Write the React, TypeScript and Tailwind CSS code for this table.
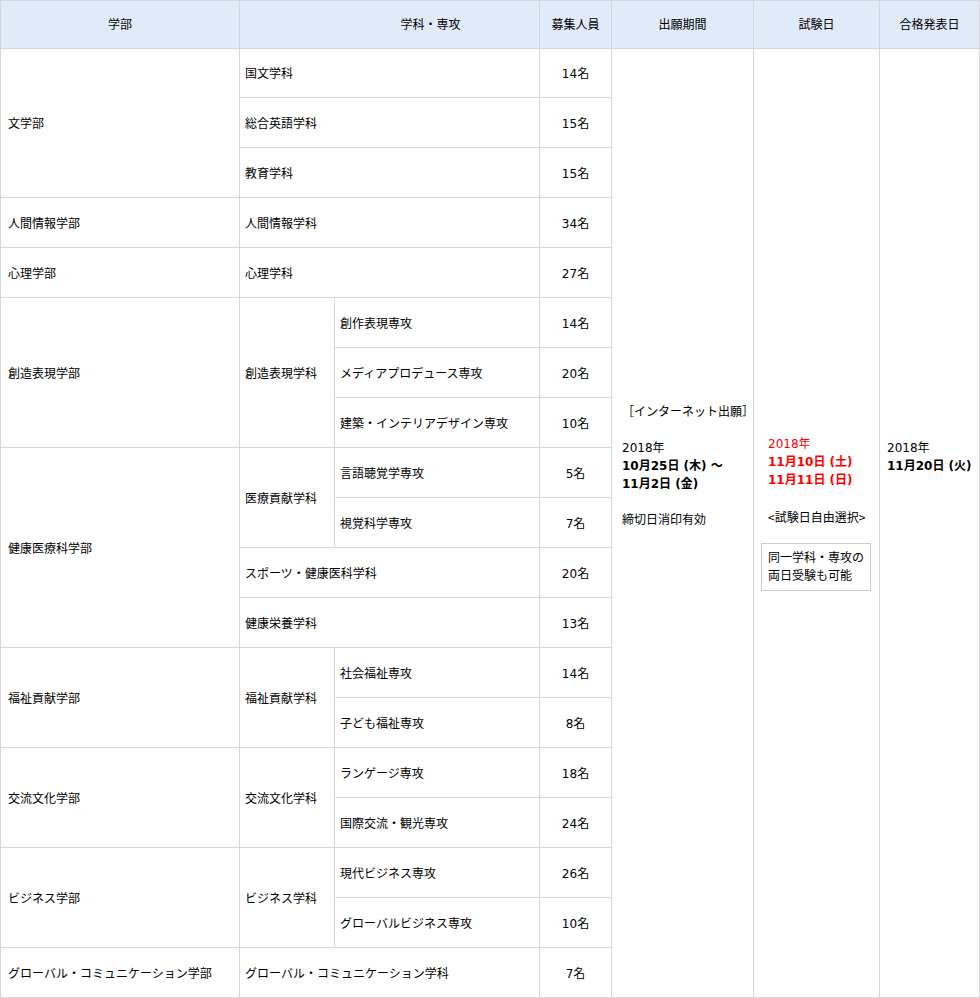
import React from "react";

const base = "bg-white flex items-center text-[12px] leading-[18px] text-black pt-[2px]";

function C({ children, className = "" }: { children: React.ReactNode; className?: string }) {
  return <div className={`${base} ${className}`}>{children}</div>;
}

function Num({ children }: { children: React.ReactNode }) {
  return <C className="justify-center">{children}</C>;
}

function H({ children, className = "" }: { children: React.ReactNode; className?: string }) {
  return (
    <div className={`bg-[#e1eaf8] flex items-center justify-center text-[12px] leading-[18px] text-black ${className}`}>
      {children}
    </div>
  );
}

export default function App() {
  return (
    <div className="w-[980px] font-['DejaVu_Sans','Noto_Sans_CJK_JP',sans-serif]">
      <div className="grid grid-cols-[238px_94px_204px_71px_141px_125px_99px] grid-rows-[47px_48px_repeat(18,49px)] gap-px p-px bg-[#d6d6d6]">
        {/* header */}
        <H>学部</H>
        <H className="col-span-2 pl-[82px]">学科・専攻</H>
        <H>募集人員</H>
        <H>出願期間</H>
        <H>試験日</H>
        <H>合格発表日</H>

        {/* row 1 */}
        <C className="row-span-3 px-[7px]">文学部</C>
        <C className="col-span-2 px-[5px]">国文学科</C>
        <Num>14名</Num>
        <div className="row-span-19 bg-white text-[12px] leading-[18px] text-black pl-[10px] pt-[354px]">
          <div>［インターネット出願］</div>
          <div className="h-[18px]" />
          <div>2018年</div>
          <div className="font-bold">10月25日 (木) ～</div>
          <div className="font-bold">11月2日 (金)</div>
          <div className="h-[18px]" />
          <div>締切日消印有効</div>
        </div>
        <div className="row-span-19 bg-white text-[12px] leading-[18px] text-black pl-[7px] pt-[386px]">
          <div className="pl-[7px] text-[#ff0000]">
            <div>2018年</div>
            <div className="font-bold">11月10日 (土)</div>
            <div className="font-bold">11月11日 (日)</div>
          </div>
          <div className="h-[19px]" />
          <div className="pl-[7px] font-['Noto_Sans_CJK_JP',sans-serif]">&lt;試験日自由選択&gt;</div>
          <div className="mt-[17px] w-fit border border-[#cccccc] px-[6px] py-[5px]">
            <div>同一学科・専攻の</div>
            <div>両日受験も可能</div>
          </div>
        </div>
        <div className="row-span-19 bg-white text-[12px] leading-[18px] text-black pl-[7px] pt-[390px]">
          <div>2018年</div>
          <div className="font-bold">11月20日 (火)</div>
        </div>

        {/* row 2 */}
        <C className="col-span-2 px-[5px]">総合英語学科</C>
        <Num>15名</Num>
        {/* row 3 */}
        <C className="col-span-2 px-[5px]">教育学科</C>
        <Num>15名</Num>

        {/* row 4 */}
        <C className="px-[7px]">人間情報学部</C>
        <C className="col-span-2 px-[5px]">人間情報学科</C>
        <Num>34名</Num>

        {/* row 5 */}
        <C className="px-[7px]">心理学部</C>
        <C className="col-span-2 px-[5px]">心理学科</C>
        <Num>27名</Num>

        {/* row 6-8 */}
        <C className="row-span-3 px-[7px]">創造表現学部</C>
        <C className="row-span-3 px-[5px]">創造表現学科</C>
        <C className="px-[5px]">創作表現専攻</C>
        <Num>14名</Num>
        <C className="px-[5px]">メディアプロデュース専攻</C>
        <Num>20名</Num>
        <C className="px-[5px]">建築・インテリアデザイン専攻</C>
        <Num>10名</Num>

        {/* row 9-12 */}
        <C className="row-span-4 px-[7px]">健康医療科学部</C>
        <C className="row-span-2 px-[5px]">医療貢献学科</C>
        <C className="px-[5px]">言語聴覚学専攻</C>
        <Num>5名</Num>
        <C className="px-[5px]">視覚科学専攻</C>
        <Num>7名</Num>
        <C className="col-span-2 px-[5px]">スポーツ・健康医科学科</C>
        <Num>20名</Num>
        <C className="col-span-2 px-[5px]">健康栄養学科</C>
        <Num>13名</Num>

        {/* row 13-14 */}
        <C className="row-span-2 px-[7px]">福祉貢献学部</C>
        <C className="row-span-2 px-[5px]">福祉貢献学科</C>
        <C className="px-[5px]">社会福祉専攻</C>
        <Num>14名</Num>
        <C className="px-[5px]">子ども福祉専攻</C>
        <Num>8名</Num>

        {/* row 15-16 */}
        <C className="row-span-2 px-[7px]">交流文化学部</C>
        <C className="row-span-2 px-[5px]">交流文化学科</C>
        <C className="px-[5px]">ランゲージ専攻</C>
        <Num>18名</Num>
        <C className="px-[5px]">国際交流・観光専攻</C>
        <Num>24名</Num>

        {/* row 17-18 */}
        <C className="row-span-2 px-[7px]">ビジネス学部</C>
        <C className="row-span-2 px-[5px]">ビジネス学科</C>
        <C className="px-[5px]">現代ビジネス専攻</C>
        <Num>26名</Num>
        <C className="px-[5px]">グローバルビジネス専攻</C>
        <Num>10名</Num>

        {/* row 19 */}
        <C className="px-[7px]">グローバル・コミュニケーション学部</C>
        <C className="col-span-2 px-[5px]">グローバル・コミュニケーション学科</C>
        <Num>7名</Num>
      </div>
    </div>
  );
}
